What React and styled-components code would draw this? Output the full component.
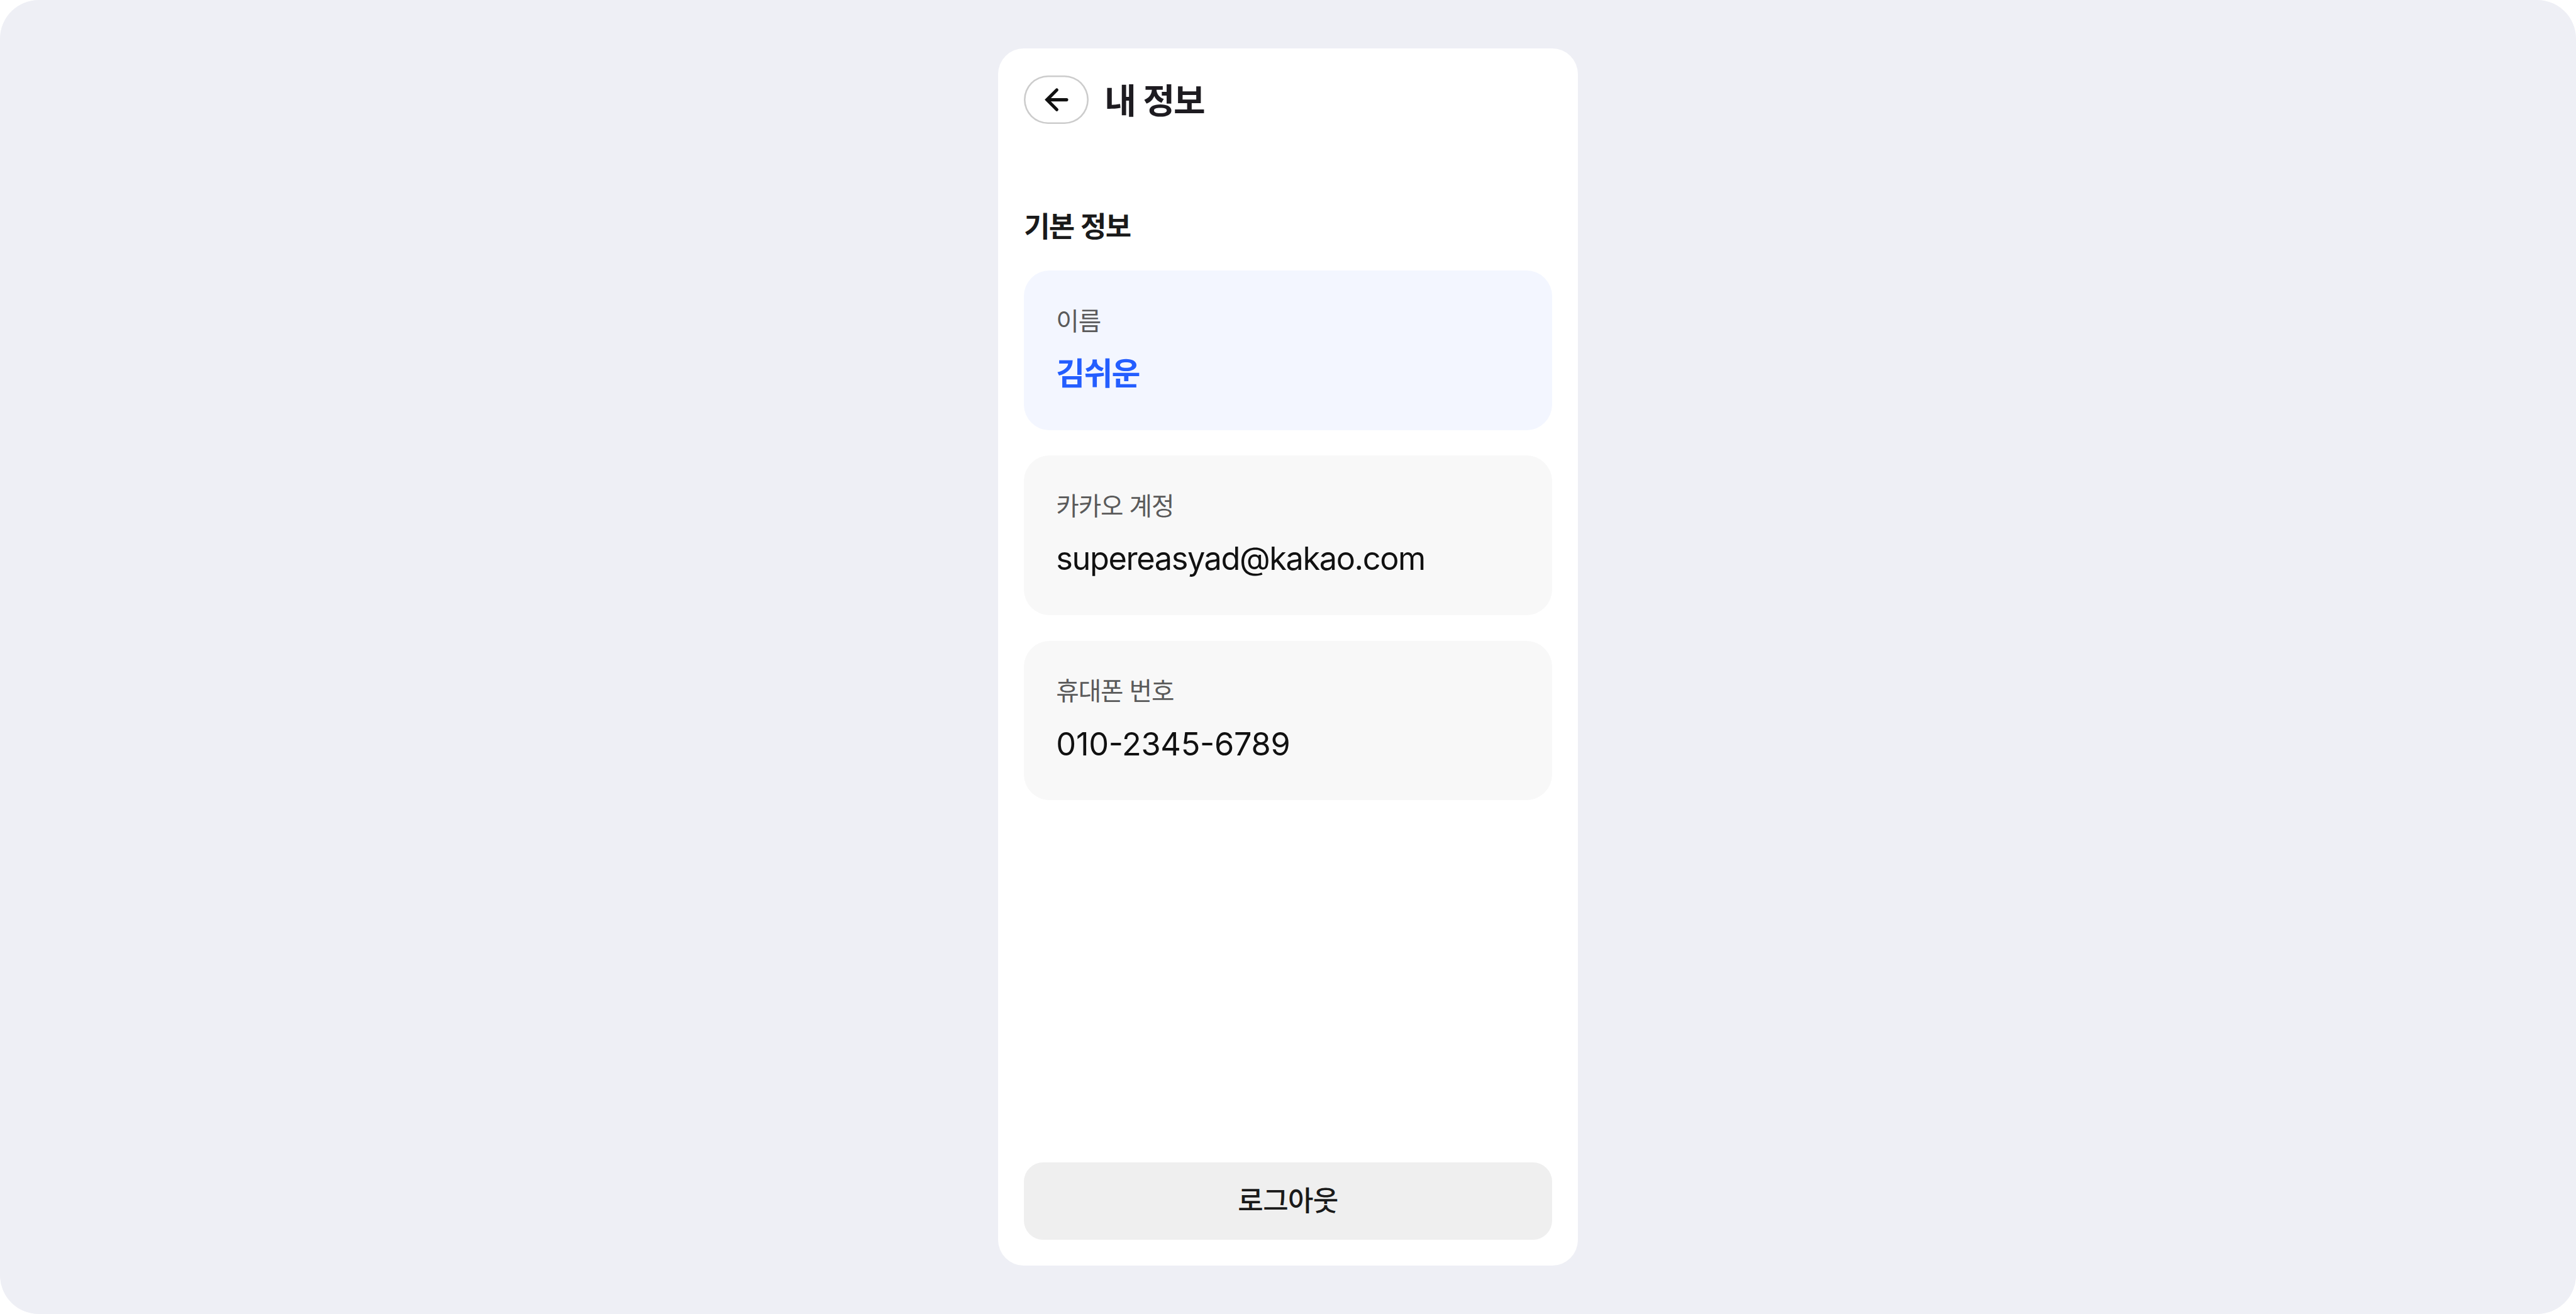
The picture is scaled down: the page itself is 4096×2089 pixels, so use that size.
import React from 'react'
import styled, { createGlobalStyle } from 'styled-components'

// 1rem = 10 design pixels
const GlobalStyle = createGlobalStyle`
html {
  font-size: 25.6px;
}

*, *::before, *::after {
  box-sizing: border-box;
  margin: 0;
  padding: 0;
}

body {
  background: #ffffff;
  font-family: 'Inter', 'Noto Sans CJK KR', sans-serif;
  color: #111111;
}
`

const Page = styled.main`
width: 100vw;
height: 100vh;
display: flex;
justify-content: center;
align-items: center;
overflow: hidden;
background: #eeeff5;
border-radius: 2.4rem;
`

const Panel = styled.section`
width: 36rem;
height: 75.6rem;
display: flex;
flex-direction: column;
padding: 1.7rem 1.6rem 1.6rem;
background: #ffffff;
border-radius: 1.6rem;
`

const Header = styled.header`
height: 3rem;
display: flex;
align-items: center;
gap: 1rem;
`

const BackButton = styled.button`
width: 4rem;
height: 3rem;
display: flex;
justify-content: center;
align-items: center;
background: #ffffff;
border: none;
border-radius: 1.5rem;
box-shadow: inset 0 0 0 0.1rem #cccccc;

svg {
  width: 2rem;
  height: 2rem;
}
`

const Title = styled.h1`
padding-top: 0.12rem;
font-size: 2.15rem;
font-weight: 700;
line-height: 3rem;
letter-spacing: -0.038em;
word-spacing: 0.035em;
color: #1d1b20;
`

const SectionTitle = styled.h2`
margin: 5.03rem 0 1.37rem;
font-size: 1.76rem;
font-weight: 700;
line-height: 2.7rem;
letter-spacing: -0.04em;
word-spacing: 0.04em;
color: #1a1a1a;
`

const CardList = styled.ul`
display: flex;
flex-direction: column;
gap: 1.6rem;
list-style: none;
`

const Card = styled.li`
height: 9.9rem;
display: flex;
flex-direction: column;
gap: 0.6rem;
padding: 2.01rem 2rem 0;
background: ${props => props.$accent ? '#f3f6ff' : '#f8f8f8'};
border-radius: 1.6rem;
`

const Label = styled.span`
font-size: 1.55rem;
line-height: 2.3rem;
letter-spacing: -0.028em;
color: #5a5a5a;
`

const Value = styled.span`
font-size: ${props => props.$accent ? '1.95rem' : '1.97rem'};
font-weight: ${props => props.$accent ? 700 : 400};
font-feature-settings: ${props => props.$numeric ? "'case'" : 'normal'};
line-height: 3rem;
letter-spacing: ${props => props.$tracking};
color: ${props => props.$accent ? '#245eff' : '#111111'};
`

const LogoutButton = styled.button`
height: 4.8rem;
margin-top: auto;
padding-bottom: 0.28rem;
background: #efefef;
border: none;
border-radius: 1.2rem;
font-family: inherit;
font-size: 1.72rem;
font-weight: 500;
letter-spacing: -0.015em;
color: #1a1a1a;
`

const fields = [
  { label: '이름', value: '김쉬운', tracking: '-0.037em', accent: true },
  { label: '카카오 계정', value: 'supereasyad@kakao.com', tracking: '-0.0275em' },
  { label: '휴대폰 번호', value: '010-2345-6789', tracking: '-0.005em', numeric: true },
]

const ArrowLeft = () => (
  <svg viewBox='0 0 20 20' fill='none' stroke='#111111' strokeWidth='2' strokeLinecap='round' strokeLinejoin='miter'>
    <path d='M10.3 3.9L4.2 10L10.3 16.1' />
    <path d='M5 10H16.4' />
  </svg>
)

const App = () => {
  return (
    <>
      <GlobalStyle />
      <Page>
        <Panel>
          <Header>
            <BackButton type='button'>
              <ArrowLeft />
            </BackButton>
            <Title>내 정보</Title>
          </Header>

          <SectionTitle>기본 정보</SectionTitle>
          <CardList>
            {fields.map(({ label, value, tracking, accent, numeric }) => (
              <Card key={label} $accent={accent}>
                <Label>{label}</Label>
                <Value $accent={accent} $tracking={tracking} $numeric={numeric}>{value}</Value>
              </Card>
            ))}
          </CardList>

          <LogoutButton type='button'>로그아웃</LogoutButton>
        </Panel>
      </Page>
    </>
  )
}

export default App
